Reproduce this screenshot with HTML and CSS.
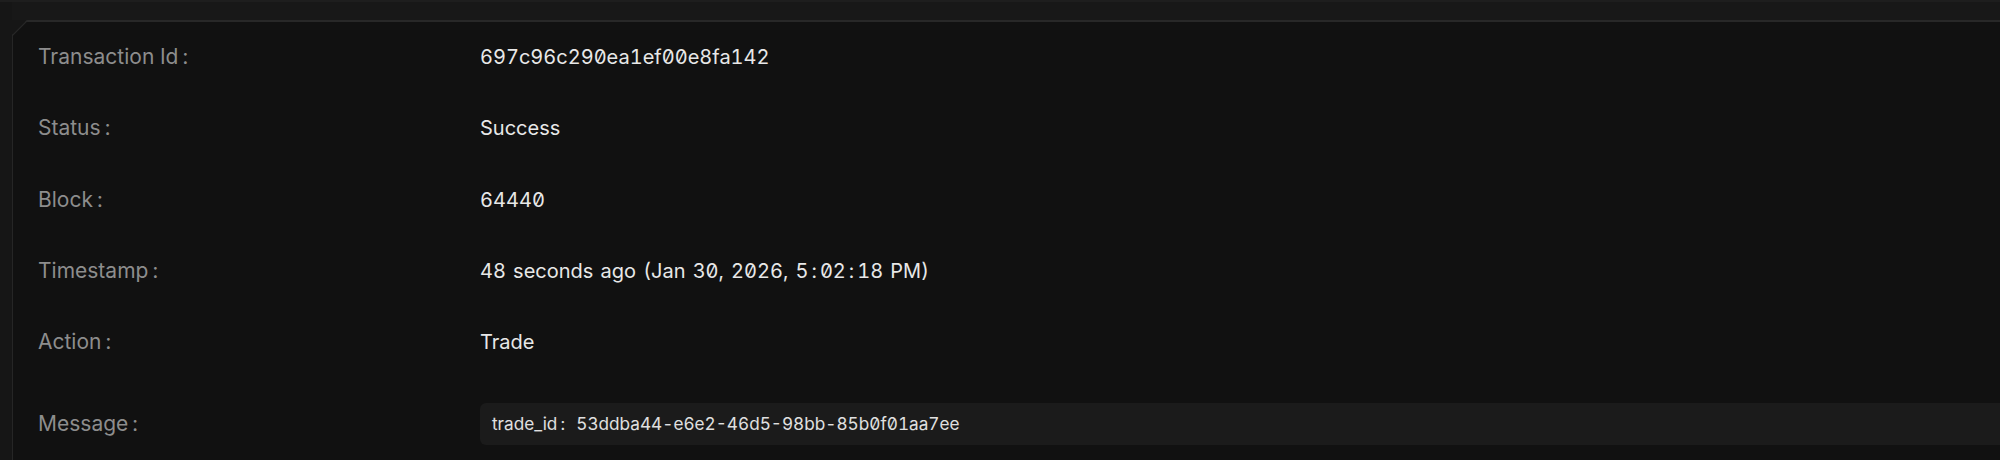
FILE: index.html
```html
<!DOCTYPE html>
<html lang="en">
<head>
<meta charset="utf-8">
<title>Transaction</title>
<link rel="stylesheet" href="styles.css">
</head>
<body>
<div class="topline"></div>
<div class="page">
  <section class="card">
    <dl class="details">
      <div class="row">
        <dt class="label">Transaction Id<span class="colon">:</span></dt>
        <dd class="value">697c96c290ea1ef00e8fa142</dd>
      </div>
      <div class="row">
        <dt class="label">Status<span class="colon">:</span></dt>
        <dd class="value">Success</dd>
      </div>
      <div class="row">
        <dt class="label">Block<span class="colon">:</span></dt>
        <dd class="value">64440</dd>
      </div>
      <div class="row">
        <dt class="label">Timestamp<span class="colon">:</span></dt>
        <dd class="value">48 seconds ago (Jan 30, 2026, 5<span class="tcolon">:</span>02<span class="tcolon">:</span>18 PM)</dd>
      </div>
      <div class="row">
        <dt class="label">Action<span class="colon">:</span></dt>
        <dd class="value">Trade</dd>
      </div>
      <div class="row row-message">
        <dt class="label">Message<span class="colon">:</span></dt>
        <dd class="value"><div class="msg">trade_id<span class="colon">:</span>&nbsp; 53ddba44-e6e2-46d5-98bb-85b0f01aa7ee</div></dd>
      </div>
    </dl>
  </section>
</div>
</body>
</html>
```

FILE: styles.css
```css
html, body {
  margin: 0;
  padding: 0;
  background: #161616;
  overflow: hidden;
  height: 460px;
}
body {
  font-family: "Inter", "Liberation Sans", sans-serif;
  font-variant-numeric: tabular-nums slashed-zero;
}
.topline {
  height: 2px;
  background: #1e1e1e;
}
.page {
  margin-left: 12px;
  margin-right: -40px;
  box-sizing: border-box;
  height: calc(100% - 2px);
  padding-top: 18px;
  background: linear-gradient(#181818 0 18px, transparent 18px);
}
.card {
  position: relative;
  background: #111111;
  border-top: 2px solid #282828;
  border-left: 1.5px solid #262626;
  height: 460px;
  clip-path: polygon(15px 0, 100% 0, 100% 100%, 0 100%, 0 15px);
  padding: 23px 0 0 25px;
  box-sizing: border-box;
}
.card::before {
  content: "";
  position: absolute;
  left: -2px;
  top: -2px;
  width: 22px;
  height: 1.6px;
  background: #282828;
  transform-origin: 0 0;
  transform: translate(0, 14.8px) rotate(-45deg);
}
.details {
  margin: 0;
  display: flex;
  flex-direction: column;
  gap: 47.3px;
}
.row {
  display: flex;
  align-items: center;
  line-height: 24px;
}
.label {
  width: 442px;
  flex: none;
  color: #8d8d8d;
  font-size: 21px;
}
.colon {
  margin-left: 4px;
}
.value {
  margin: 0;
  color: #e8e8e8;
  font-size: 20px;
  word-spacing: 1.8px;
  flex: 1;
}
.tcolon {
  margin: 0 3px;
}
.row-message {
  margin-top: 2px;
}
.msg {
  background: #1b1b1b;
  border-radius: 6px;
  height: 42px;
  display: flex;
  align-items: center;
  padding-left: 12px;
  font-size: 17.2px;
  word-spacing: 1px;
  color: #e0e0e0;
}
.msg .colon {
  margin-left: 3px;
}
```
